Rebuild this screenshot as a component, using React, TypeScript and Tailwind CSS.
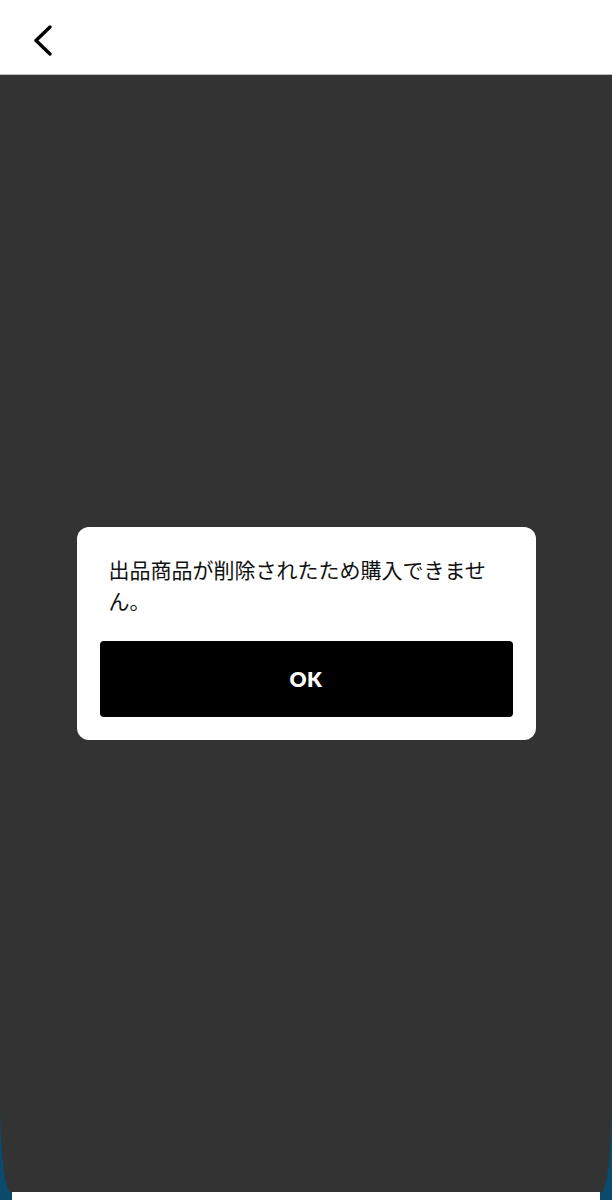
import React from "react";

export default function App() {
  return (
    <div className="w-[612px] h-[1200px] bg-[#0b4a6b] flex flex-col overflow-hidden font-['Noto_Sans_CJK_JP',sans-serif]">
      <header className="h-[75px] shrink-0 bg-white flex items-center pl-[32px] border-b border-[#bdbdbd]">
        <svg width="22" height="32" viewBox="0 0 22 32" fill="none" className="mt-[8px]">
          <polyline points="18,2 4,15.5 18,29" stroke="black" strokeWidth="3.4" strokeLinecap="round" strokeLinejoin="round" />
        </svg>
      </header>

      <main className="flex-1 bg-[#333333] rounded-b-[11px_95px] flex items-center justify-center">
        <div className="w-[459px] bg-white rounded-[12px] pt-[27px] pb-[23px] px-[23px]">
          <p className="px-[9px] text-[21px] leading-[31px] text-[#111] font-['Noto_Sans_CJK_JP',sans-serif]">
            出品商品が削除されたため購入できません。
          </p>
          <button className="mt-[25px] w-full h-[76px] bg-black rounded-[4px] text-white text-[21px] font-extrabold font-['Lato',sans-serif] tracking-[0.5px]">
            OK
          </button>
        </div>
      </main>

      <div className="h-[8px] shrink-0 bg-white mx-[12px]" />
    </div>
  );
}
